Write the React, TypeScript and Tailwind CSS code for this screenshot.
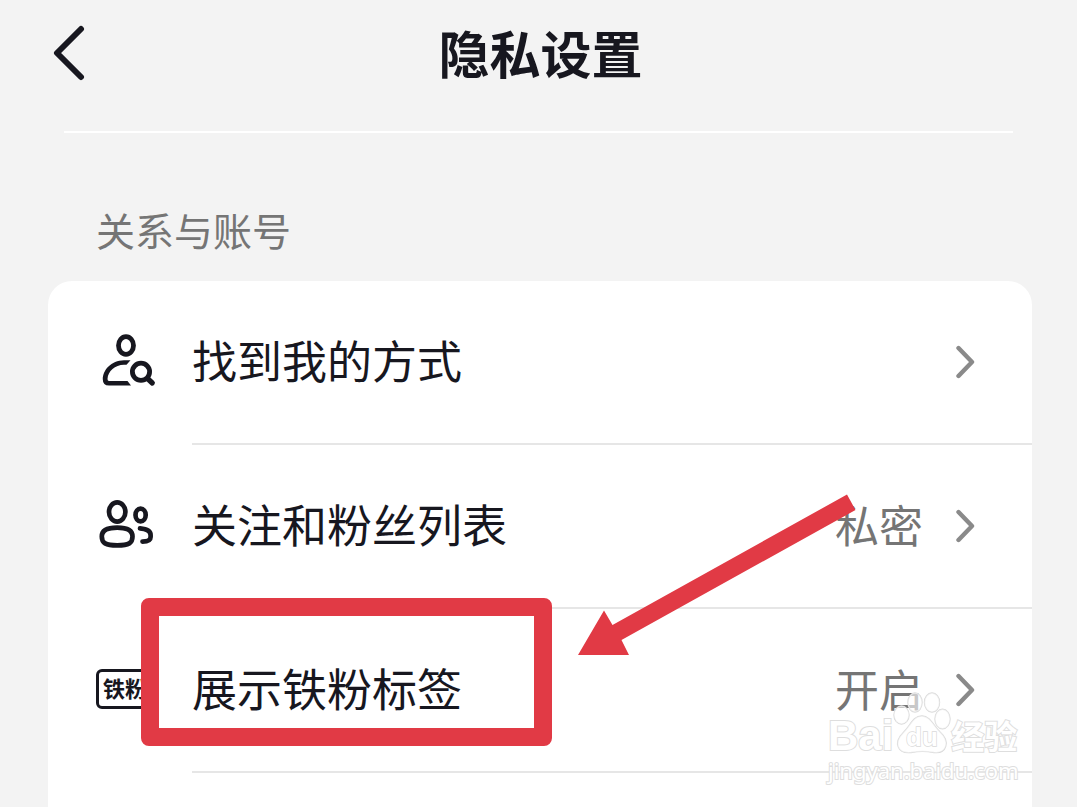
import type { ReactNode } from 'react'

function PersonSearchIcon() {
  return (
    <svg width="60" height="60" viewBox="0 0 60 60" fill="none" stroke="currentColor" strokeWidth="4.8">
      <ellipse cx="28" cy="12.5" rx="7.5" ry="8.8" />
      <path d="M32.5 27.2H26C13 27.5 4.8 37 4.8 46.5Q4.8 52.5 11 52.5H33L29.5 48H11Q9.5 48 9.5 46C10 38 17 32 26 31.8H28.5Z" fill="currentColor" stroke="none" />
      <circle cx="43" cy="38.8" r="8.6" />
      <path d="M49.5 45.5L54.3 50" strokeWidth="5.2" strokeLinecap="round" />
    </svg>
  )
}

function PeopleIcon() {
  return (
    <svg width="60" height="60" viewBox="0 0 60 60" fill="none" stroke="currentColor" strokeWidth="4.7" strokeLinecap="round">
      <ellipse cx="19.2" cy="15" rx="8.2" ry="9.6" />
      <path d="M19.2 30.7C29 30.7 34.5 33 34.5 39.5C34.5 46 31 48.4 19.2 48.4C7.5 48.4 3.8 46 3.8 39.5C3.8 33 9.5 30.7 19.2 30.7Z" />
      <ellipse cx="42.6" cy="18" rx="5.1" ry="6.3" />
      <path d="M42 31.4C49 32 52.6 33.5 52.6 38V40C52.6 43.5 50 44.6 44.5 44.6" />
    </svg>
  )
}

function FanBadge() {
  return (
    <span className="mb-1 -ml-0.5 flex h-10 w-15 items-center overflow-hidden rounded-md border-3 border-current pb-1 pl-1 text-[22px] leading-none font-bold whitespace-nowrap">
      铁粉
    </span>
  )
}

function Chevron() {
  return (
    <svg width="20" height="36" viewBox="0 0 20 36" fill="none" stroke="#8a8a8a" strokeWidth="4.4" strokeLinecap="round" strokeLinejoin="round">
      <path d="M2.5 4L16 18L2.5 32" />
    </svg>
  )
}

type Row = { label: string; value?: string; icon: ReactNode; marked?: boolean }

const rows: Row[] = [
  { label: '找到我的方式', icon: <PersonSearchIcon /> },
  { label: '关注和粉丝列表', value: '私密', icon: <PeopleIcon /> },
  { label: '展示铁粉标签', value: '开启', icon: <FanBadge />, marked: true },
]

function SettingRow({ label, value, icon, marked }: Row) {
  return (
    <li className="relative">
      <button className="flex h-[164px] w-full items-stretch text-left text-[45px] leading-[60px]">
        <span className="flex w-36 shrink-0 items-center pl-[50px]">{icon}</span>
        <span className="flex flex-1 items-center border-b-2 border-[#e6e6e6] pr-14">
          <span className="flex-1 pb-1">{label}</span>
          <span className="mr-[33px] pb-1 text-[44px] text-[#757575]">{value}</span>
          <Chevron />
        </span>
      </button>
      {marked && (
        <div className="pointer-events-none absolute -top-[11px] left-[93px] h-[148px] w-[411px] rounded-lg border-18 border-[#e13a45]" />
      )}
    </li>
  )
}

function Watermark() {
  return (
    <div className="pointer-events-none absolute top-[410px] right-2.5 w-[194px] text-white [-webkit-text-stroke:2px_#dedede] [paint-order:stroke_fill]">
      <div className="flex h-[66px] items-end">
        <span className="font-['Liberation_Sans'] text-[42px] leading-[42px] font-bold">Bai</span>
        <svg width="58" height="66" viewBox="0 0 58 66" className="shrink-0" fill="#fff" fillOpacity=".6" stroke="#dadada" strokeWidth="1.4">
          <ellipse cx="8.5" cy="24" rx="7.5" ry="9" />
          <ellipse cx="22" cy="11.5" rx="7" ry="9.5" />
          <ellipse cx="39" cy="11.5" rx="7.5" ry="9.5" />
          <ellipse cx="49.5" cy="28" rx="7.5" ry="9.8" />
          <path d="M29 25C37 25 40 34 47 41C58 51 53 63 41 61.5C33 60 26 60 18 61.5C5 63 0 52 10 42C18 34 20 25 29 25Z" />
          <text x="13" y="55" fontFamily="Liberation Sans" fontSize="26" fontWeight="bold" fillOpacity="1">du</text>
        </svg>
        <span className="pb-1 text-[33px] leading-[36px] font-bold">经验</span>
      </div>
      <div className="font-['Noto_Sans'] text-[22px] leading-[26px]">jingyan.baidu.com</div>
    </div>
  )
}

export default function App() {
  return (
    <div className="flex min-h-screen flex-col bg-[#f3f3f3] font-['Noto_Sans_CJK_SC',sans-serif] text-[#17171f]">
      <header className="relative flex h-[104px] items-center justify-center pl-1">
        <button aria-label="返回" className="absolute left-[50px]">
          <svg width="38" height="58" viewBox="0 0 38 58" fill="none" stroke="currentColor" strokeWidth="6" strokeLinecap="round" strokeLinejoin="round">
            <path d="M31 6L7 30L31 54" />
          </svg>
        </button>
        <h1 className="text-[51px] leading-[60px] font-bold">隐私设置</h1>
      </header>
      <hr className="mx-16 mt-[27px] border-t-2 border-white" />

      <h2 className="mt-[72px] ml-24 text-[39px] leading-[48px] text-[#757575]">关系与账号</h2>
      <section className="relative mt-7 mr-[45px] ml-12 flex-1 rounded-t-3xl bg-white">
        <ul>
          {rows.map((row) => (
            <SettingRow key={row.label} {...row} />
          ))}
        </ul>
        <svg className="pointer-events-none absolute top-[213px] left-[530px]" width="278" height="162" viewBox="0 0 278 162" fill="#e13a45">
          <path d="M269 0.5L277.5 16L43.5 146L51 161H0L26 116.5L34.5 131Z" />
        </svg>
        <Watermark />
      </section>
    </div>
  )
}
